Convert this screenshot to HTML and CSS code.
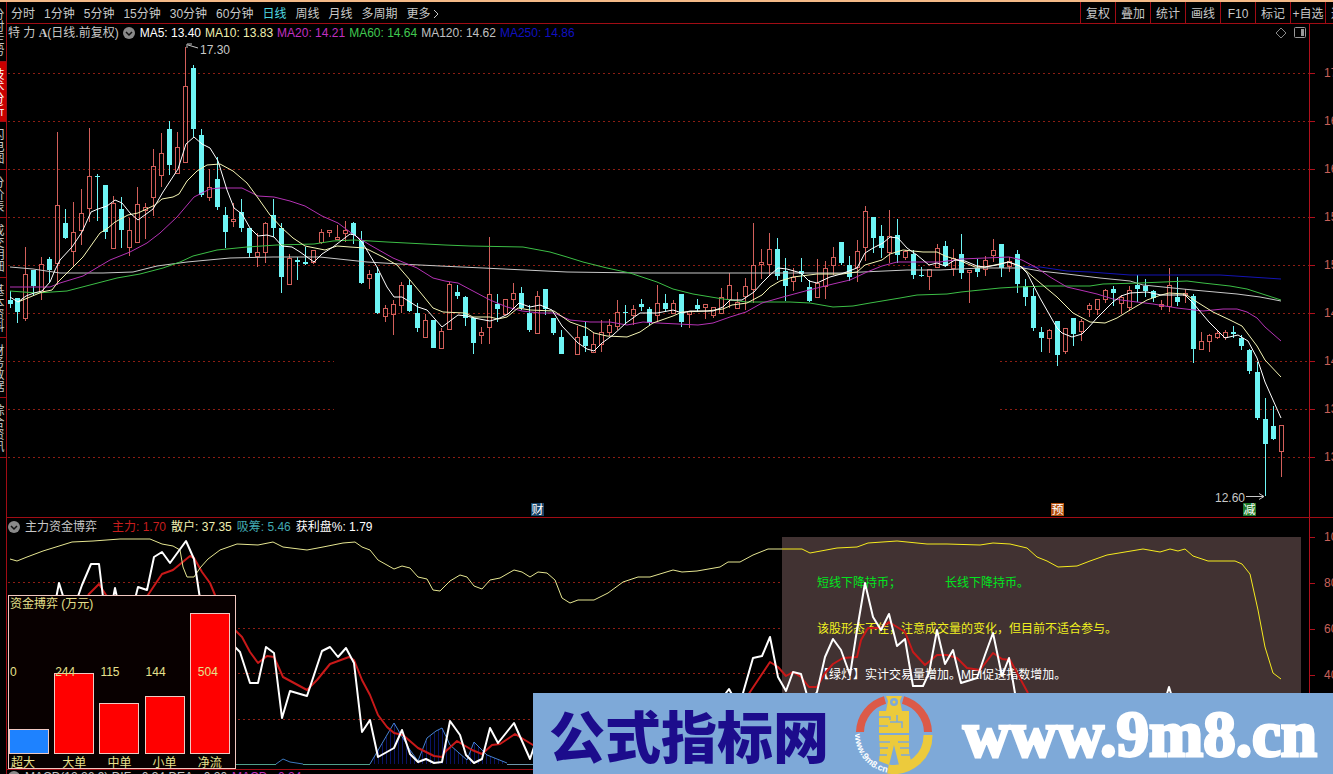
FILE: index.html
```
<!DOCTYPE html>
<html lang="zh-CN">
<head>
    <meta charset="UTF-8">
    <meta name="viewport" content="width=device-width, initial-scale=1.0">
    <title>特力A 日线</title>
    <link rel="stylesheet" href="styles.css">
</head>
<body>
    <div class="strip"></div>
    <div class="app">
        <aside class="sidebar">
            <button class="w4">分时走势</button>
            <button class="w4 active">技术分析</button>
            <button>闪电图</button>
            <button>分价表</button>
            <button class="w4">成交明细</button>
            <button class="w4">基本资料</button>
            <button class="w4">财务数据</button>
            <button class="w4">综合资讯</button>
        </aside>

        <main class="main">
            <nav class="toolbar">
                <div class="periods">
                    <button>分时</button>
                    <button>1分钟</button>
                    <button>5分钟</button>
                    <button>15分钟</button>
                    <button>30分钟</button>
                    <button>60分钟</button>
                    <button class="active">日线</button>
                    <button>周线</button>
                    <button>月线</button>
                    <button>多周期</button>
                    <button>更多<svg width="10" height="10" viewBox="0 0 10 10"><path d="M3 1l4 4-4 4" fill="none" stroke="#c8c8c8"/></svg></button>
                </div>
                <div class="tools">
                    <button>复权</button>
                    <button>叠加</button>
                    <button>统计</button>
                    <button>画线</button>
                    <button>F10</button>
                    <button>标记</button>
                    <button>+自选</button>
                    <button>返回</button>
                </div>
            </nav>

            <section class="panel price">
                <div class="plot">
                    <div class="legend">
                        <span class="name">特 力 <b>A</b>(日线.前复权)</span>
                        <svg class="toggle" width="12" height="12" viewBox="0 0 12 12"><circle cx="6" cy="6" r="6" fill="#8a8a8a"/><path d="M3 5l3 3 3-3" fill="none" stroke="#111" stroke-width="1.5"/></svg>
                        <span class="white">MA5: 13.40</span>
                        <span class="cream">MA10: 13.83</span>
                        <span class="magenta">MA20: 14.21</span>
                        <span class="green">MA60: 14.64</span>
                        <span class="grey">MA120: 14.62</span>
                        <span class="blue">MA250: 14.86</span>
                        <svg class="corner" width="32" height="14" viewBox="0 0 32 14"><path d="M6 2l5 5-5 5-5-5z" fill="none" stroke="#888"/><rect x="19.500" y="1.500" width="11" height="10" rx="1" fill="none" stroke="#999"/><path d="M26 3h3v7h-3z" fill="#999"/></svg>
                    </div>
                    <svg class="chart" id="priceChart" viewBox="7 42 1302 475" preserveAspectRatio="none"></svg>
                </div>
                <div class="axis price-axis">
                    <span>17.00</span>
                    <span>16.50</span>
                    <span>16.00</span>
                    <span>15.50</span>
                    <span>15.00</span>
                    <span>14.50</span>
                    <span>14.00</span>
                    <span>13.50</span>
                    <span>13.00</span>
                </div>
            </section>

            <section class="panel fund">
                <div class="plot">
                    <div class="legend">
                        <svg class="toggle" width="12" height="12" viewBox="0 0 12 12"><circle cx="6" cy="6" r="6" fill="#8a8a8a"/><path d="M3 5l3 3 3-3" fill="none" stroke="#111" stroke-width="1.5"/></svg>
                        <span class="title">主力资金博弈</span>
                        <span class="red">主力: 1.70</span>
                        <span class="cream">散户: 37.35</span>
                        <span class="teal">吸筹: 5.46</span>
                        <span class="white">获利盘%: 1.79</span>
                    </div>
                    <div class="notice">
                        <p class="lime"><span>短线下降持币；</span><span>长线下降持币。</span></p>
                        <p class="yellow">该股形态不佳，注意成交量的变化，但目前不适合参与。</p>
                        <p class="white">【绿灯】实计交易量增加。MEI促进指数增加。</p>
                    </div>
                    <svg class="chart" id="fundChart" viewBox="7 536 1302 233" preserveAspectRatio="none"></svg>
                    <div class="flow">
                        <div class="flow-title">资金搏弈 (万元)</div>
                        <div class="flow-bars">
                            <div class="col"><span class="value">0</span><div class="bar out" style="height: 25px"></div></div>
                            <div class="col"><span class="value">244</span><div class="bar" style="height: 81px"></div></div>
                            <div class="col"><span class="value">115</span><div class="bar" style="height: 51px"></div></div>
                            <div class="col"><span class="value">144</span><div class="bar" style="height: 58px"></div></div>
                            <div class="col net"><span class="value">504</span><div class="bar" style="height: 141px"></div></div>
                        </div>
                        <div class="flow-names">
                            <span>超大</span>
                            <span>大单</span>
                            <span>中单</span>
                            <span>小单</span>
                            <span>净流</span>
                        </div>
                    </div>
                </div>
                <div class="axis fund-axis">
                    <span>100.0</span>
                    <span>80.00</span>
                    <span>60.00</span>
                    <span>40.00</span>
                    <span>20.00</span>
                </div>
            </section>

            <section class="panel next">
                <div class="legend">
                    <svg class="toggle" width="12" height="12" viewBox="0 0 12 12"><circle cx="6" cy="6" r="6" fill="#8a8a8a"/></svg>
                    <span class="grey">MACD(12,26,9) DIF: -0.34 DEA: -0.20</span>
                    <span class="magenta">MACD: -0.24</span>
                </div>
            </section>
        </main>
    </div>

    <div class="banner">
        <span class="site-name">公式指标网</span>
        <svg class="logo" width="80" height="80" viewBox="0 0 80 80">
            <path d="M5 38A34 34 0 0 1 30 6" fill="none" stroke="#dc5a48" stroke-width="8"/>
            <path d="M48 6A34 34 0 0 1 73 38" fill="none" stroke="#dc5a48" stroke-width="8"/>
            <path d="M73 41A34 34 0 0 1 33 75" fill="none" stroke="#ecca3c" stroke-width="9"/>
            <path d="M31 2h16l-2 5 2 10h7v22H24V17h7l2-10z" fill="#ecca3c"/>
            <path d="M24 41h30v17l2 9-5 4h-7l-5-20-5 20-10-4 1-9z" fill="#ecca3c"/>
            <circle cx="39" cy="8" r="4" fill="#7ea9d8"/>
            <circle cx="39" cy="8" r="1.500" fill="#ecca3c"/>
            <path d="M24 23h11v3M24 32h9M42 21v7h5v6M35 28h7M24 48h11M43 48h11M24 54h9M45 54h10M24 61h8M46 61h10" fill="none" stroke="#7ea9d8" stroke-width="1.500"/>
            <path id="ring" d="M0 40A39 39 0 0 0 36 79" fill="none"/>
            <text class="ring-text"><textPath href="#ring">www.9m8.cn</textPath></text>
        </svg>
        <span class="site-url">www.9m8.cn</span>
    </div>

    <script src="chart.js"></script>
</body>
</html>
```

FILE: styles.css
```
* {
    box-sizing: border-box;
    margin: 0;
    padding: 0;
}

body {
    height: 100vh;
    display: flex;
    flex-direction: column;
    overflow: hidden;
    position: relative;
    background: #000;
    color: #c8c8c8;
    font-family: "Liberation Sans", "Noto Sans CJK SC", sans-serif;
    font-size: 12px;
    line-height: 18px;
}

button {
    background: none;
    border: 0;
    color: inherit;
    font: inherit;
    white-space: nowrap;
}

.strip {
    height: 2px;
    flex: none;
    background: #f4b987;
}

.app {
    flex: 1;
    display: flex;
    min-height: 0;
}

/* left tabs */
.sidebar {
    width: 7px;
    flex: none;
    display: flex;
    flex-direction: column;
    overflow: hidden;
    border-right: 1px solid #a00c14;
}

.sidebar button {
    height: 48px;
    flex: none;
    writing-mode: vertical-rl;
    text-orientation: upright;
    border-bottom: 1px solid #a00c14;
    margin-left: -12px;
    width: 18px;
    font-size: 12px;
    line-height: 18px;
}

.sidebar .w4 {
    height: 60px;
}

.sidebar .active {
    background: #c80000;
    color: #fff;
}

.main {
    flex: 1;
    min-width: 0;
    display: flex;
    flex-direction: column;
}

/* toolbar */
.toolbar {
    height: 22px;
    flex: none;
    display: flex;
    justify-content: space-between;
    overflow: hidden;
    border-bottom: 1px solid #a00c14;
}

.periods {
    display: flex;
    gap: 9px;
    padding-left: 4px;
}

.periods button {
    display: flex;
    align-items: center;
    padding-top: 2px;
}

.periods .active {
    color: #4fd8e0;
}

.tools {
    display: flex;
    width: 253px;
    flex: none;
    overflow: hidden;
}

.tools button {
    width: 35px;
    flex: none;
    padding-top: 2px;
    border-left: 1px solid #a00c14;
}

/* panels */
.panel {
    display: flex;
    border-bottom: 1px solid #a00c14;
}

.price {
    flex: 1;
    min-height: 0;
}

.fund {
    height: 252px;
    flex: none;
}

.next {
    height: 4px;
    flex: none;
    overflow: hidden;
    border: 0;
}

.plot {
    flex: 1;
    min-width: 0;
    display: flex;
    flex-direction: column;
    position: relative;
}

.legend {
    height: 18px;
    flex: none;
    display: flex;
    align-items: center;
    gap: 5px;
    padding-left: 1px;
    white-space: nowrap;
}

.price .legend {
    gap: 4px;
}

.price .toggle {
    margin-right: 1px;
}

.next .legend {
    height: 13px;
}

.legend .name b {
    font-family: "Liberation Serif", serif;
}

.legend .title {
    margin-right: 10px;
}

.legend .corner {
    margin-left: auto;
    margin-right: 2px;
}

.chart {
    display: block;
    width: 100%;
    flex: 1;
    min-height: 0;
    position: relative;
}

.axis {
    width: 24px;
    flex: none;
    overflow: hidden;
    display: flex;
    flex-direction: column;
    border-left: 1px solid #b0101c;
    color: #c8605a;
}

.axis span {
    flex: none;
    display: flex;
    align-items: center;
}

.axis span::before {
    content: "";
    width: 5px;
    height: 1px;
    flex: none;
    margin-right: 9px;
    background: #b0101c;
}

.price-axis {
    padding-top: 25px;
}

.price-axis span {
    height: 48px;
}

.fund-axis {
    padding-top: 10px;
}

.fund-axis span {
    height: 18px;
    margin-bottom: 28px;
}

/* colours */
.white { color: #fff; }
.cream { color: #f0f0b0; }
.magenta { color: #c030c0; }
.green { color: #40c850; }
.grey { color: #c0c0c0; }
.blue { color: #1010c0; }
.red { color: #c81e1e; }
.teal { color: #40a8b0; }
.lime { color: #00e61e; }
.yellow { color: #f0f020; }

/* advice box */
.notice {
    position: absolute;
    right: 8px;
    top: 19px;
    bottom: 0;
    width: 519px;
    padding: 37px 0 0 35px;
    display: flex;
    flex-direction: column;
    gap: 28px;
    background: #413232;
    white-space: nowrap;
}

.notice p {
    height: 18px;
}

.notice .lime span {
    display: inline-block;
    width: 128px;
}

/* money flow inset */
.flow {
    position: absolute;
    left: 1px;
    bottom: 0;
    width: 228px;
    height: 174px;
    background: #080000;
    border: 1px solid #f0c8c0;
    color: #e6e08c;
}

.flow-title {
    height: 16px;
    line-height: 16px;
    padding-left: 1px;
}

.flow-bars,
.flow-names {
    display: grid;
    grid-template-columns: repeat(5, 1fr);
}

.flow-bars {
    height: 142px;
}

.col {
    position: relative;
    display: flex;
    align-items: flex-end;
}

.bar {
    width: 40px;
    background: #ff0000;
    border: 1px solid #f0c8c0;
}

.bar.out {
    background: #1e82ff;
}

.value {
    position: absolute;
    left: 1px;
    top: 51px;
}

.net .value {
    left: 8px;
}

.flow-names {
    line-height: 18px;
}

.flow-names span {
    padding-left: 8px;
}

.flow-names span:first-child {
    padding-left: 2px;
}

/* svg text */
.tag {
    font-size: 12px;
    fill: #fff;
    text-anchor: middle;
}

.quote {
    font-size: 12px;
    fill: #c8c8c8;
}

/* site banner */
.banner {
    position: absolute;
    right: 0;
    bottom: 0;
    width: 800px;
    height: 81px;
    display: flex;
    align-items: center;
    padding-left: 16px;
    background: #7ea9d8;
    white-space: nowrap;
}

.site-name {
    font-family: "Noto Sans CJK SC", sans-serif;
    font-size: 56px;
    font-weight: 900;
    line-height: 80px;
    color: #1c0c8c;
}

.logo {
    flex: none;
    margin: 0 28px 0 26px;
}

.ring-text {
    font-size: 9px;
    font-weight: bold;
    fill: #fff;
}

.site-url {
    font-family: "Liberation Serif", serif;
    font-size: 65px;
    font-weight: bold;
    line-height: 80px;
    color: #fff;
    -webkit-text-stroke: 3px #fff;
}
```

FILE: chart.js
```
const SVG_NS = "http://www.w3.org/2000/svg";
const UP = 1;
const DOWN = 0;

// [high, body top, body bottom, low, direction]
const candles = [
    [291,300,304,308,0],[298,298,312,323,0],[247,274,318,321,1],[270,270,286,296,0],[257,264,292,300,1],
    [257,259,270,282,0],[132,205,263,285,1],[209,223,238,239,0],[202,232,251,266,1],[189,213,230,245,1],
    [128,176,208,222,1],[174,176,177,221,0],[185,185,232,239,0],[196,203,248,248,1],[197,209,230,248,0],
    [218,230,247,256,1],[187,204,242,243,1],[203,207,210,239,1],[149,166,197,216,1],[133,153,175,187,1],
    [121,129,165,175,0],[132,147,173,173,1],[47,86,162,162,1],[65,68,129,137,0],[129,135,195,197,0],
    [169,187,197,201,1],[157,179,207,210,0],[207,215,232,248,0],[203,219,221,227,1],[199,212,228,232,0],
    [228,228,253,257,0],[233,252,256,267,1],[222,223,252,263,1],[199,215,228,237,0],[223,228,277,293,0],
    [254,258,284,284,1],[257,260,262,280,0],[247,262,264,265,0],[250,250,262,264,1],[229,232,242,244,1],
    [230,230,232,237,1],[225,237,239,240,1],[221,230,233,242,1],[222,223,235,244,0],[231,240,283,284,0],
    [270,274,278,289,1],[267,273,313,314,0],[305,308,316,322,1],[300,304,314,335,1],[282,285,305,313,1],
    [280,285,311,312,0],[303,313,328,332,0],[314,320,337,337,1],[320,320,348,348,0],[328,331,348,348,1],
    [282,284,329,329,1],[285,292,296,299,0],[296,297,318,326,0],[317,318,343,354,0],[327,332,335,344,1],
    [237,294,327,344,1],[294,304,309,322,0],[299,299,314,315,1],[283,293,299,309,1],[287,293,308,310,0],
    [305,313,330,332,0],[291,296,333,333,1],[289,289,309,315,0],[318,318,333,335,0],[330,337,354,354,0],
    null,[326,337,354,354,1],[322,336,346,352,0],[333,344,352,352,1],[320,332,344,352,1],
    [319,325,332,336,1],[300,312,326,330,1],[305,312,312,325,0],[305,309,315,325,1],[299,304,307,311,0],
    [307,309,323,325,0],[285,303,315,322,1],[294,303,309,311,0],[300,303,313,314,1],[294,294,322,327,0],
    [311,311,314,328,1],[299,305,309,312,0],[304,304,307,319,1],[307,307,315,318,1],[288,297,313,313,1],
    [273,285,299,308,1],[292,302,308,308,1],[278,286,296,310,1],[223,265,289,303,1],[249,262,264,279,1],
    [233,249,264,275,1],[238,249,276,280,0],[258,271,286,301,0],[268,277,281,291,1],[258,271,274,282,0],
    [280,287,301,302,0],[259,283,297,297,1],[261,268,286,299,1],[247,257,265,275,1],[242,242,263,265,0],
    [256,265,277,281,0],[240,251,267,282,1],[206,211,247,261,1],[217,217,238,253,0],[225,236,248,258,0],
    [210,236,252,263,1],[219,235,255,263,0],[250,251,257,260,1],[250,254,275,279,0],[267,275,275,277,0],
    [269,269,276,290,1],[244,248,267,268,1],[241,246,266,267,0],[249,258,268,276,1],[234,254,273,279,0],
    [270,270,272,303,1],[259,268,272,277,0],[256,260,269,276,1],[239,250,255,262,1],[244,244,268,277,0],
    [257,261,266,272,1],[250,254,284,293,0],[279,286,297,306,0],[288,296,328,331,0],[327,332,338,352,0],
    [329,330,338,353,1],[321,321,355,366,0],[328,328,351,354,1],[318,318,334,346,0],[319,321,331,341,1],
    [303,305,309,317,1],[299,299,309,315,1],[289,290,299,303,1],[286,289,293,306,0],[295,297,303,314,1],
    [286,290,307,311,1],[275,285,289,302,0],[279,286,291,297,0],[290,291,298,302,0],[300,304,306,310,1],
    [268,285,306,312,1],[277,297,302,306,0],[289,293,295,303,1],[294,296,349,363,0],[332,341,349,349,1],
    [334,335,341,352,1],[331,333,337,339,1],[330,332,337,340,1],[326,332,334,338,0],[335,338,346,350,0],
    [349,350,371,374,0],[362,372,418,420,0],[398,419,444,496,0],[406,426,439,440,0],[425,425,451,477,1]
];

const averages = {
    "#1414b4": "1022,267 1040,267 1067,271 1090,272 1130,275 1220,275 1281,279",
    "#c8c8c8": "10,267 33,269 60,273 103,273 133,272 157,266 187,262 230,258 273,257 320,257 367,262 400,264 440,266 483,268 567,272 640,273 840,273 907,270 940,270 980,268 1023,268 1040,271 1067,274 1100,278 1130,281 1143,285 1163,287 1193,290 1237,294 1260,297 1281,301",
    "#3cbe46": "10,291 37,293 67,291 90,285 117,278 140,274 163,268 180,262 193,256 217,250 247,247 277,245 314,244 333,241 354,240 387,242 445,245 470,246 523,247 550,252 567,257 583,262 607,268 630,273 657,282 673,289 693,294 723,299 747,302 790,302 810,303 833,307 853,306 870,303 900,298 917,295 947,294 961,292 1000,288 1017,287 1047,286 1090,286 1103,284 1140,283 1187,281 1203,283 1230,286 1247,289 1281,300",
    "#b432b4": "10,287 50,287 60,283 83,276 110,260 130,252 147,243 160,233 177,217 194,197 210,189 220,188 242,188 258,196 274,197 290,201 305,206 322,216 338,223 354,235 370,245 393,258 417,268 433,278 445,281 458,283 473,291 490,300 507,307 522,311 540,313 554,313 570,320 590,322 610,322 627,325 643,322 658,323 698,325 713,323 730,317 746,312 762,303 783,297 809,290 833,284 850,280 867,272 882,266 897,262 940,262 961,259 985,258 1009,257 1022,260 1037,268 1050,277 1067,287 1080,290 1097,294 1113,299 1137,302 1153,304 1177,308 1203,311 1223,309 1237,309 1247,312 1257,318 1265,327 1281,341",
    "#f5f5b4": "18,302 42,292 52,290 58,282 70,270 83,257 95,240 100,233 108,228 115,222 128,215 138,213 155,205 162,199 173,197 179,194 187,181 197,171 207,165 220,164 233,171 247,183 258,198 270,215 282,228 293,238 305,246 325,250 337,246 350,247 365,248 383,257 397,265 410,280 420,292 433,308 443,312 465,313 473,317 490,317 498,319 507,317 518,308 530,310 554,311 570,322 587,328 594,333 607,336 627,337 640,332 653,323 673,316 682,312 707,311 723,309 732,305 747,303 762,295 770,287 780,281 793,277 817,274 842,274 857,272 865,265 882,260 890,254 903,250 923,252 937,252 945,256 961,261 975,267 985,267 1009,262 1022,267 1033,277 1057,297 1073,313 1090,322 1105,323 1117,318 1130,310 1147,300 1161,295 1169,293 1185,294 1197,302 1213,312 1230,320 1242,326 1257,346 1265,360 1281,377",
    "#ffffff": "10,297 18,302 26,296 34,293 42,291 50,282 55,270 60,260 72,247 82,232 91,212 98,209 107,206 115,200 122,203 130,213 138,220 153,209 163,192 178,169 186,144 194,137 202,144 210,148 218,161 227,190 234,208 242,214 250,228 258,236 267,235 274,237 282,246 292,247 300,252 314,262 322,254 333,247 350,234 355,235 362,242 377,267 387,287 394,297 402,297 418,307 427,310 442,327 450,321 458,315 467,316 474,318 490,321 500,318 508,314 519,303 530,307 540,305 552,310 562,326 578,343 587,349 594,351 602,343 613,335 626,323 640,313 657,313 673,310 682,313 690,311 713,311 723,307 730,300 742,300 754,292 762,283 770,275 778,268 787,269 801,273 809,281 817,283 830,277 841,274 857,268 865,253 873,248 883,243 890,237 898,238 907,248 917,255 929,265 937,263 945,266 955,260 965,261 977,266 985,267 997,265 1008,262 1020,266 1027,273 1040,298 1057,328 1062,333 1072,337 1082,334 1088,328 1097,318 1105,310 1113,302 1121,296 1130,293 1147,292 1161,295 1185,295 1193,303 1209,322 1225,338 1238,335 1248,341 1257,358 1265,382 1281,418"
};

const retail = "10,559 17,561 27,557 43,551 72,542 93,541 120,539 150,539 162,544 173,546 180,550 183,567 187,577 194,577 200,568 208,559 220,550 237,544 258,545 273,542 283,547 307,550 323,547 343,543 355,542 362,547 370,550 378,560 394,569 402,566 410,568 418,577 427,579 433,590 440,591 450,581 460,575 467,577 474,586 482,589 490,580 500,578 514,570 522,572 530,577 538,572 547,573 555,580 562,598 570,603 578,600 594,600 608,593 623,582 638,577 650,577 673,570 682,572 697,571 720,567 728,562 740,562 753,555 768,549 782,549";
const retailRecent = "782,549 802,549 810,553 837,548 857,547 868,543 897,541 927,544 947,544 980,545 993,543 1010,544 1027,548 1037,557 1047,561 1058,567 1077,566 1090,561 1107,555 1143,549 1160,552 1170,549 1178,551 1185,549 1193,556 1208,561 1235,561 1242,564 1250,574 1258,610 1265,647 1273,673 1281,679";
const mainForce = "48,640 59,583 68,612 76,602 82,585 91,564 99,564 107,630 115,588 123,625 131,615 138,587 147,590 154,557 162,552 170,563 186,541 194,559 202,612 218,625 236,648 240,652 250,683 258,683 266,647 274,653 282,718 290,691 307,696 322,651 330,647 338,657 346,648 354,663 362,732 370,720 378,757 394,748 402,730 410,754 418,762 426,759 434,763 442,762 450,721 460,735 466,755 474,763 482,759 490,728 498,743 514,723 530,759 538,735 600,755 700,740 723,697 729,689 736,702 743,693 753,658 762,656 770,637 778,677 786,691 793,672 801,674 809,702 817,692 825,657 833,639 841,650 850,675 857,630 865,583 873,617 881,630 889,614 897,646 905,639 913,686 923,686 929,673 937,630 945,664 953,650 961,683 977,678 985,655 993,633 1002,676 1009,658 1017,705 1030,750 1150,750 1169,687 1185,740";
const average = "88,595 99,584 106,595 125,612 148,595 162,574 173,570 190,556 194,558 202,572 210,583 215,595 225,617 236,631 242,637 250,652 258,663 267,656 274,657 283,677 307,690 317,680 330,664 349,657 354,660 362,680 370,695 378,715 387,727 394,733 403,735 418,748 434,756 442,757 445,752 457,741 472,750 482,754 492,745 500,744 515,734 533,745 600,750 735,715 750,692 770,662 778,667 786,676 793,672 801,677 809,687 817,687 825,673 833,664 843,658 857,657 861,640 868,628 881,628 889,622 905,632 913,652 925,665 937,655 947,655 957,658 967,668 980,670 993,653 1002,659 1010,660 1028,693";
const collect = [[370,764],[394,723],[410,750],[418,761],[427,738],[436,731],[442,728],[450,745],[467,760],[474,742],[487,755],[507,763]];

function draw(svg, tag, attrs, text) {
    const el = document.createElementNS(SVG_NS, tag);
    for (const key in attrs) {
        el.setAttribute(key, attrs[key]);
    }
    if (text) {
        el.textContent = text;
    }
    svg.appendChild(el);
}

function grid(svg, y, x1, x2) {
    draw(svg, "path", { d: `M${x1} ${y + 0.5}H${x2}`, stroke: "#8c1e14", "stroke-dasharray": "2 3" });
}

function line(svg, points, color, width) {
    draw(svg, "polyline", { points: points, fill: "none", stroke: color, "stroke-width": width, "stroke-linejoin": "round" });
}

function drawCandle(svg, c, i) {
    const left = Math.floor(10 + i * 7.994);
    const color = c[4] === UP ? "#d25f5a" : "#6ef5f5";
    // wick above and below the body
    draw(svg, "rect", { x: left, y: c[0], width: 1, height: c[1] - c[0], fill: color });
    draw(svg, "rect", { x: left, y: c[2], width: 1, height: c[3] - c[2], fill: color });
    if (c[4] === DOWN) {
        draw(svg, "rect", { x: left - 2, y: c[1], width: 5, height: Math.max(c[2] - c[1], 1), fill: color });
    } else {
        draw(svg, "rect", { x: left - 1.5, y: c[1] + 0.5, width: 4, height: c[2] - c[1], fill: "none", stroke: color });
    }
}

function drawTag(svg, x, text, color) {
    draw(svg, "rect", { x: x, y: 503, width: 13, height: 13, fill: color });
    draw(svg, "text", { x: x + 6.5, y: 514, class: "tag" }, text);
}

const price = document.getElementById("priceChart");
for (let y = 73; y <= 457; y += 48) {
    if (y === 361 || y === 409) {
        grid(price, y, 8, 334);
        grid(price, y, 1000, 1309);
    } else {
        grid(price, y, 8, 1309);
    }
}
candles.forEach((c, i) => {
    if (c) {
        drawCandle(price, c, i);
    }
});
for (const color in averages) {
    line(price, averages[color], color, 1);
}
draw(price, "path", { d: "M198 48L188 45M192 44H187V48", fill: "none", stroke: "#c8c8c8" });
draw(price, "text", { x: 200, y: 54, class: "quote" }, "17.30");
draw(price, "path", { d: "M1246 496.5H1264M1259 493.5L1264 496.5L1259 499.5", fill: "none", stroke: "#c8c8c8" });
draw(price, "text", { x: 1215, y: 502, class: "quote" }, "12.60");
drawTag(price, 531, "财", "#174468");
drawTag(price, 1051, "预", "#b4500f");
drawTag(price, 1243, "减", "#1e7828");

const fund = document.getElementById("fundChart");
[582, 628, 673, 719].forEach(y => grid(fund, y, 8, 782));

// height of the accumulation curve, as thin columns
for (let x = 374; x < 505; x += 4) {
    const k = collect.findIndex(p => p[0] > x);
    const a = collect[k - 1];
    const b = collect[k];
    const y = a[1] + (b[1] - a[1]) * (x - a[0]) / (b[0] - a[0]);
    draw(fund, "path", { d: `M${x + 0.5} ${Math.round(y)}V764`, stroke: "#0a1464" });
}
line(fund, "236,764.5 276,764.5", "#50a08c", 1);
line(fund, "276,764 283,759 290,762 303,764", "#3c78be", 1);
line(fund, "303,764.5 370,764.5", "#50a08c", 1);
line(fund, collect.map(p => p.join(",")).join(" "), "#4682d2", 1);
line(fund, "507,764.5 534,764.5", "#6e96aa", 1);
line(fund, average, "#c81919", 2);
line(fund, retail, "#e6e691", 1);
line(fund, retailRecent, "#f5eb1e", 1);
line(fund, mainForce, "#ffffff", 2);
```
